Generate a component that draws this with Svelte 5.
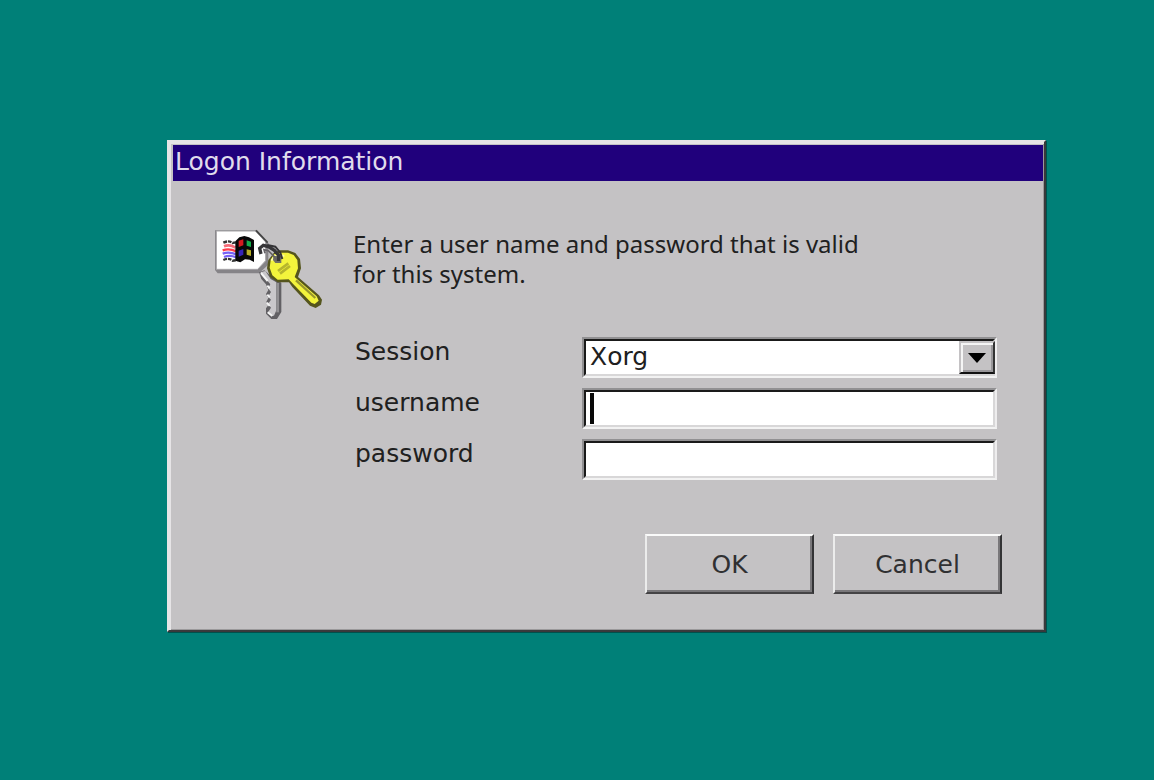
<script>
  let session = $state('Xorg');
  let username = $state('');
  let password = $state('');
</script>

<main>
  <form class="dialog" onsubmit={(e) => e.preventDefault()}>
    <h1>Logon Information</h1>
    <div class="body">
      <svg class="keys" viewBox="24 21 336 285" width="112" height="95" aria-hidden="true">
        <path d="M30 31V150L38 160H162L190 134V70L153 31Z" fill="#858387" />
        <path d="M34 33H151L182 66V122L158 148H34Z" fill="#fff" stroke="#a5a3a6" stroke-width="3" />
        <path d="M153 31L188 68" stroke="#444" stroke-width="5" />
        <path d="M55 68Q72 60 83 69L97 66M55 120Q72 112 83 122L97 120" fill="none" stroke="#333" stroke-width="7" stroke-dasharray="11 3" />
        <path d="M57 79Q74 72 91 83" fill="none" stroke="#f56b78" stroke-width="8" />
        <path d="M53 91Q72 84 94 94" fill="none" stroke="#ff3b48" stroke-width="7" />
        <path d="M53 101Q72 94 94 103M57 111Q74 104 94 112" fill="none" stroke="#7560f5" stroke-width="7" />
        <path d="M91 64L103 52L118 48L132 52L147 60V126L134 119L120 118L106 127L91 122Z" fill="#080808" />
        <path d="M101 62L115 58V76L101 81Z" fill="#d51b20" />
        <path d="M125 61L138 65V81L125 77Z" fill="#16ad4b" />
        <path d="M101 92L115 87V104L101 110Z" fill="#3524b9" />
        <path d="M125 88L138 91V108L125 104Z" fill="#b8af25" />
        <path d="M162 157L178 151L202 172L229 188V276L216 297H199L183 281V265L190 256L184 245L190 234L183 222L190 210L183 193L169 177Z" fill="#626064" />
        <path d="M166 157L181 153L197 177L214 187V271L207 287H199L189 277L198 263L189 252L198 239L189 230L198 216L189 205L196 193Z" fill="#c9c7ca" />
        <path d="M168 159L188 183M187 197L194 205M187 224L194 232M186 248L194 258M188 277L202 288" stroke="#f4f4f4" stroke-width="6" />
        <path d="M218 189V277" stroke="#929093" stroke-width="8" />
        <path d="M208 97L225 91H249L271 99L285 117L288 145L279 171L342 226L351 239L348 254L332 264L315 257L262 201L252 187L218 187L195 170L186 145L190 120Z" fill="#55551d" />
        <path d="M207 103L228 98H249L266 105L277 120L279 145L269 171L335 229L341 242L329 252L319 248L265 193L251 178L218 179L202 166L194 143L197 121Z" fill="#f3f43c" />
        <path d="M199 122L210 107H238" fill="none" stroke="#ffffa5" stroke-width="6" />
        <path d="M273 181L331 234" stroke="#99972d" stroke-width="7" />
        <path d="M219 153L250 130M225 161L255 138" stroke="#b6b52d" stroke-width="8" />
        <path d="M205 108H229V129H211L204 120Z" fill="#706f66" />
        <path d="M168 102L164 85L175 76L190 80L208 91L221 106L220 123" fill="none" stroke="#373639" stroke-width="10" />
        <path d="M180 100L177 89L190 92L207 109L214 122" fill="none" stroke="#656266" stroke-width="5" />
        <path d="M187 75L211 80L226 98L232 117" fill="none" stroke="#343336" stroke-width="6" />
      </svg>
      <div class="content">
        <p>Enter a user name and password that is valid<br />for this system.</p>
        <div class="fields">
          <label for="session">Session</label>
          <div class="control">
            <select id="session" bind:value={session}>
              <option>Xorg</option>
            </select>
            <span class="drop" aria-hidden="true">
              <svg viewBox="0 0 18 10" width="18" height="10"><path d="M0 0H18L9 10Z" /></svg>
            </span>
          </div>
          <label for="username">username</label>
          <div class="control">
            <input id="username" type="text" bind:value={username} />
            {#if !username}<span class="caret"></span>{/if}
          </div>
          <label for="password">password</label>
          <div class="control">
            <input id="password" type="password" bind:value={password} />
          </div>
        </div>
      </div>
    </div>
    <div class="actions">
      <button type="submit">OK</button>
      <button type="button">Cancel</button>
    </div>
  </form>
</main>

<style>
  :global(body) {
    margin: 0;
    background: #008078;
  }
  main {
    padding: 140px 108px 40px 167px;
    font-family: "DejaVu Sans", sans-serif;
    font-size: 25px;
    color: #202020;
  }
  * {
    box-sizing: border-box;
  }
  .dialog {
    background: #c4c2c4;
    border: 2px solid;
    border-color: #e6e4e6 #39393b #39393b #e6e4e6;
    padding: 3px 1px 36px 4px;
    box-shadow: inset 2px 2px #e6e4e6, inset -1px -1px #9b999b, 1px 1px #00504c;
  }
  h1 {
    margin: 0;
    height: 36px;
    padding-left: 2px;
    line-height: 34px;
    font-size: 25px;
    font-weight: 400;
    color: #e0dcec;
    background: #20007c;
  }
  .body {
    display: flex;
    align-items: flex-start;
    gap: 28px;
    padding: 46px 46px 0 40px;
  }
  .keys {
    flex: none;
  }
  .content {
    flex: 1;
  }
  p {
    margin: 0;
    padding-top: 2px;
    font-family: "Noto Sans", sans-serif;
    font-size: 24px;
    line-height: 30px;
  }
  .fields {
    display: grid;
    grid-template-columns: 229px 1fr;
    row-gap: 10px;
    margin-top: 48px;
  }
  label {
    padding-left: 2px;
    line-height: 30px;
  }
  .control {
    position: relative;
    height: 41px;
    border: 2px solid;
    border-color: #919092 #eeedee #f2f2f2 #919092;
  }
  select,
  input {
    display: block;
    appearance: none;
    width: 100%;
    height: 100%;
    margin: 0;
    padding: 0 4px 2px;
    border: 2px solid;
    border-color: #1a1a1a #d8d7d8 #d8d7d8 #1a1a1a;
    border-radius: 0;
    outline: none;
    background: #fff;
    color: #202020;
    font: inherit;
    line-height: 30px;
  }
  input {
    caret-color: transparent;
  }
  .drop {
    position: absolute;
    top: 2px;
    right: 0;
    bottom: 2px;
    width: 36px;
    display: grid;
    place-items: center;
    border: 2px solid;
    border-color: #c4c2c4 #333 #111 #c4c2c4;
    background: #c4c2c4;
    box-shadow: inset 2px 2px #f5f5f5, inset -2px -2px #99979a;
    pointer-events: none;
  }
  .caret {
    position: absolute;
    top: 3px;
    bottom: 3px;
    left: 6px;
    width: 4px;
    background: #080808;
  }
  .actions {
    display: flex;
    justify-content: flex-end;
    gap: 19px;
    padding: 54px 41px 0 0;
  }
  button {
    width: 169px;
    height: 60px;
    padding: 1px 0 0;
    border: 2px solid;
    border-color: #fafafa #333335 #444345 #ececec;
    border-radius: 0;
    background: #c4c2c4;
    box-shadow: inset -2px -2px #79777a;
    color: #303032;
    font: inherit;
  }
</style>
